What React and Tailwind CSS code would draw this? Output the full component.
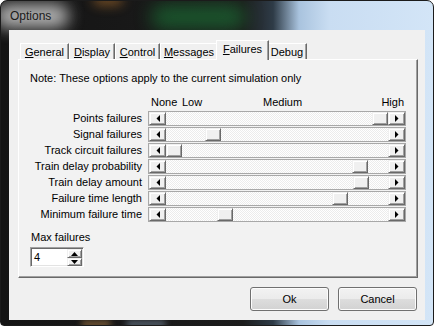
import React from "react";

const FONT = "[font-family:'Liberation_Sans',Arial,sans-serif]";

const rows = [
  { label: "Points failures", pos: 206 },
  { label: "Signal failures", pos: 39 },
  { label: "Track circuit failures", pos: 0 },
  { label: "Train delay probability", pos: 186 },
  { label: "Train delay amount", pos: 187 },
  { label: "Failure time length", pos: 166 },
  { label: "Minimum failure time", pos: 51 },
];

const tabs = [
  { key: "G", rest: "eneral", w: "w-[49px]" },
  { key: "D", rest: "isplay", w: "w-[46px]" },
  { key: "C", rest: "ontrol", w: "w-[45px]" },
  { key: "M", rest: "essages", w: "w-[58px]" },
  { key: "F", rest: "ailures", w: "w-[53px]", active: true },
  { key: "", rest: "Debug", w: "w-[40px]" },
];

const raised =
  "border border-t-[#f0f0f0] border-l-[#f0f0f0] border-r-[#696969] border-b-[#696969] shadow-[inset_1px_1px_#ffffff,inset_-1px_-1px_#a0a0a0] bg-[#f0f0f0]";

function Arrow({ dir }) {
  const pts = {
    left: "4,0 4,7 0.5,3.5",
    right: "0,0 0,7 3.5,3.5",
  };
  return (
    <svg width="4" height="7" viewBox="0 0 4 7">
      <polygon points={pts[dir]} fill="#000" />
    </svg>
  );
}

function SpinArrow({ up }) {
  return (
    <svg width="7" height="4" viewBox="0 0 7 4">
      <polygon points={up ? "0,4 7,4 3.5,0" : "0,0 7,0 3.5,4"} fill="#000" />
    </svg>
  );
}

function Track({ pos }) {
  return (
    <div className="flex h-[15px] w-[258px] border border-[#a8a8a8]">
      <div className={`${raised} flex h-[13px] w-[17px] items-center justify-center`}>
        <Arrow dir="left" />
      </div>
      <div className="relative h-[13px] flex-1 [background-image:repeating-conic-gradient(#ffffff_0%_25%,#ececec_0%_50%)] [background-size:2px_2px]">
        <div
          className={`${raised} absolute top-0 h-[13px] w-[16px]`}
          style={{ left: pos }}
        />
      </div>
      <div className={`${raised} flex h-[13px] w-[17px] items-center justify-center`}>
        <Arrow dir="right" />
      </div>
    </div>
  );
}

function Tab({ tab }) {
  if (tab.active) {
    return (
      <div
        className={`${tab.w} relative z-10 -mx-[2px] -mb-[1px] flex h-[20px] items-start justify-center border-l border-t border-r border-l-white border-t-white border-r-[#696969] bg-[#f0f0f0] pt-[2px] shadow-[inset_-1px_0_#a0a0a0]`}
      >
        <span>
          <u>{tab.key}</u>
          {tab.rest}
        </span>
      </div>
    );
  }
  return (
    <div
      className={`${tab.w} flex h-[16px] items-center justify-center border-l border-t border-r border-l-white border-t-white border-r-[#696969] shadow-[inset_-1px_0_#a0a0a0] pt-[1px]`}
    >
      <span>
        {tab.key ? <u>{tab.key}</u> : null}
        {tab.rest}
      </span>
    </div>
  );
}

export default function App() {
  return (
    <div className={`h-[328px] w-[438px] overflow-hidden bg-white ${FONT} text-[11px] leading-[13px] text-black`}>
      <div className="relative flex h-[326px] w-[434px] flex-col overflow-hidden rounded-t-[7px] rounded-b-[4px] border border-[#1b1b1b] [background-image:linear-gradient(90deg,#141414_0%,#1c1c1c_56%,#2e3b47_63%,#a9c3de_69%,#c9ddf2_76%,#d3e5f7_100%)]">
        {/* glass blur decorations */}
        <div className="absolute left-[150px] top-[4px] h-[24px] w-[95px] rounded-full bg-[#1b7f3a] opacity-60 blur-[9px]" />
        <div className="absolute left-[92px] top-[-6px] h-[10px] w-[30px] rounded-full bg-[#c07a30] opacity-60 blur-[6px]" />
        <div className="absolute left-[-6px] top-[3px] h-[24px] w-[74px] rounded-full bg-[#c4c4c4] opacity-90 blur-[8px]" />
        <div className="absolute bottom-[-2px] left-[80px] h-[6px] w-[30px] rounded-full bg-[#c89050] opacity-60 blur-[3px]" />
        <div className="absolute bottom-[-2px] left-[125px] h-[6px] w-[40px] rounded-full bg-[#8aa0b8] opacity-60 blur-[3px]" />

        <div className="relative flex h-[29px] items-center pl-[9px] pt-[2px] text-[12px] text-[#1a1a1a]">
          Options
        </div>

        <div className="relative ml-[8px] flex h-[290px] w-[416px] flex-col bg-[#f0f0f0]">
          <div className="ml-[9px] mt-[10px] w-[400px]">
            <div className="flex h-[19px] items-end pl-[2px]">
              {tabs.map((t) => (
                <Tab key={t.rest} tab={t} />
              ))}
            </div>
            <div className="flex h-[219px] flex-col border border-t-white border-l-white border-r-[#696969] border-b-[#696969] bg-[#f2f2f2] shadow-[inset_-1px_-1px_#a0a0a0]">
              <div className="ml-[11px] mt-[12px]">
                Note: These options apply to the current simulation only
              </div>

              <div className="ml-[129px] mt-[11px] flex w-[258px] pl-[3px] pr-[2px]">
                <span className="w-[31px]">None</span>
                <span className="w-[81px]">Low</span>
                <span>Medium</span>
                <span className="ml-auto">High</span>
              </div>

              <div className="mt-[2px] flex flex-col">
                {rows.map((r) => (
                  <div key={r.label} className="mb-[1px] flex h-[15px] items-center">
                    <div className="w-[123px] text-right">{r.label}</div>
                    <div className="ml-[6px]">
                      <Track pos={r.pos} />
                    </div>
                  </div>
                ))}
              </div>

              <div className="ml-[12px] mt-[8px]">Max failures</div>
              <div className="ml-[11px] mt-[3px] flex h-[20px] w-[54px] border border-t-[#a0a0a0] border-l-[#a0a0a0] border-r-white border-b-white bg-white shadow-[inset_1px_1px_#696969,inset_-1px_-1px_#e3e3e3]">
                <div className="flex flex-1 items-center pl-[3px] pt-[1px]">4</div>
                <div className="mr-[1px] mt-[1px] flex flex-col">
                  <div className={`${raised} flex h-[9px] w-[15px] items-center justify-center`}>
                    <SpinArrow up />
                  </div>
                  <div className={`${raised} flex h-[8px] w-[15px] items-center justify-center`}>
                    <SpinArrow />
                  </div>
                </div>
              </div>
            </div>
          </div>

          <div className="mt-[9px] flex justify-end gap-[9px] pr-[8px]">
            <button className="flex h-[24px] w-[79px] items-center justify-center rounded-[3px] border border-[#707070] shadow-[inset_0_0_0_1px_#fcfcfc] [background-image:linear-gradient(#f2f2f2_0%,#ebebeb_50%,#dddddd_51%,#d2d2d2_100%)]">
              Ok
            </button>
            <button className="flex h-[24px] w-[79px] items-center justify-center rounded-[3px] border border-[#707070] shadow-[inset_0_0_0_1px_#fcfcfc] [background-image:linear-gradient(#f2f2f2_0%,#ebebeb_50%,#dddddd_51%,#d2d2d2_100%)]">
              Cancel
            </button>
          </div>
        </div>
      </div>
    </div>
  );
}
